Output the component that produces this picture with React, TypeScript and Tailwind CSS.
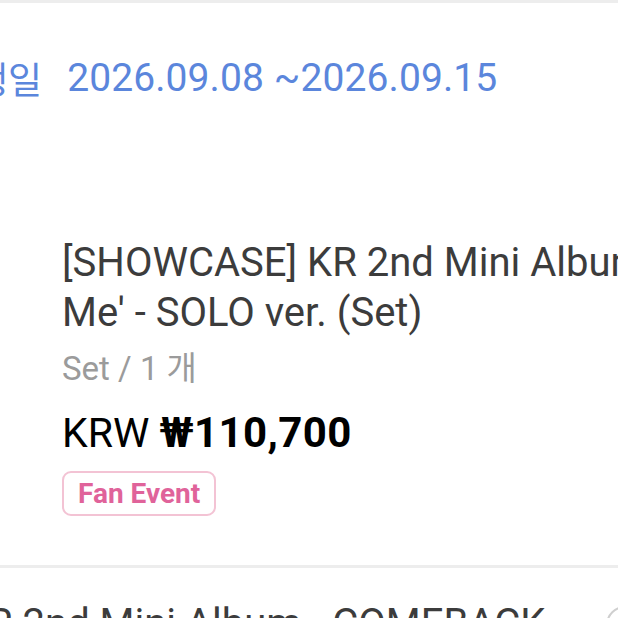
export default function App() {
  return (
    <div
      className="w-[618px] h-[618px] overflow-hidden bg-white relative"
      style={{ fontFamily: 'Roboto, "Noto Sans CJK KR", sans-serif' }}
    >
      <div className="h-[3px] bg-[#ededed]" />

      {/* issue date row */}
      <div className="flex items-center mt-[56px] h-[39px] whitespace-nowrap text-[39px] text-[#5b86dc] leading-none">
        <span
          className="ml-[-60px] text-[37px] shrink-0"
          style={{ fontFamily: '"Noto Sans CJK KR", sans-serif' }}
        >
          발행일
        </span>
        <span className="ml-[25px] tracking-[0.1px]">2026.09.08 ~2026.09.15</span>
      </div>

      {/* product */}
      <div className="pl-[62px] mt-[140px] whitespace-nowrap">
        <div className="text-[40px] leading-[50px] text-[#3c3c3c]">
          <div>[SHOWCASE] KR 2nd Mini Album 'Love</div>
          <div>Me' - SOLO ver. (Set)</div>
        </div>
        <div className="mt-[11px] text-[33px] leading-[40px] text-[#9b9b9b]">
          Set / 1 개
        </div>
        <div className="mt-[21px] text-[41px] leading-[46px] text-black">
          KRW <span className="font-bold text-[42px] tracking-[0.4px]">₩110,700</span>
        </div>
        <div className="mt-[15px] inline-flex items-center h-[45px] px-[14px] rounded-[9px] border-2 border-[#f3c3d4] text-[28px] font-bold text-[#e0639a]">
          Fan Event
        </div>
      </div>

      <div className="mt-[49px] h-[3px] bg-[#ededed]" />

      {/* next item, cut off */}
      <div className="mt-[31px] ml-[-12px] whitespace-nowrap text-[40px] leading-[50px] text-[#3c3c3c]">
        R 2nd Mini Album - COMEBACK
      </div>
      <div className="absolute right-[-26px] bottom-[-26px] w-[38px] h-[38px] rounded-full border-2 border-[#cfcfcf]" />
    </div>
  );
}
